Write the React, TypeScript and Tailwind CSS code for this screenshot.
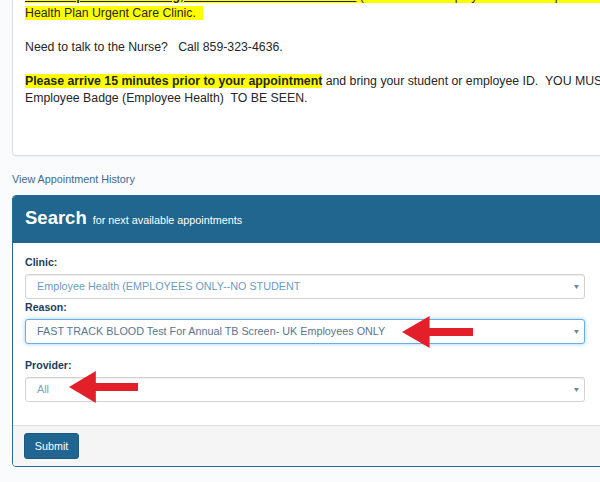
import React from 'react';

const Arrow = ({ className }: { className: string }) => (
  <svg className={className} viewBox="0 0 72 32" preserveAspectRatio="none">
    <path d="M0 16 L28 0 L28 12 L72 12 L72 20 L28 20 L28 32 Z" fill="#e3202a" />
  </svg>
);

const Caret = () => (
  <svg width="5" height="4" viewBox="0 0 5 4" className="mr-[2px]">
    <path d="M0 0 L5 0 L2.5 4 Z" fill="#6a8aa2" />
  </svg>
);

interface SelectProps {
  value: string;
  color: string;
  focused?: boolean;
}

const FakeSelect: React.FC<SelectProps> = ({ value, color, focused = false }) => (
  <div
    className={`mt-[5px] w-[560px] h-[25px] rounded-[3px] flex items-center justify-between pl-[11px] pr-[3px] text-[10.8px] bg-white ${
      focused
        ? 'border border-[#66afe9] shadow-[0_0_4px_rgba(102,175,233,0.6)]'
        : 'border border-[#d2d2d2] shadow-[inset_0_1px_1px_rgba(0,0,0,0.075)]'
    }`}
  >
    <span className="whitespace-nowrap" style={{ color }}>{value}</span>
    <Caret />
  </div>
);

const Label = ({ text, className = '' }: { text: string; className?: string }) => (
  <div className={`text-[10.6px] leading-[14px] font-bold text-[#1c3d5c] ${className}`}>{text}</div>
);

export default function App() {
  return (
    <div className="relative w-[600px] h-[482px] overflow-hidden bg-[#fafbfd] font-['Liberation_Sans',Arial,sans-serif]">
      {/* notice card, top is scrolled off */}
      <div className="ml-[12px] mt-[-30px] w-[640px] bg-white border border-[#dddddd] rounded-[4px] pt-[17px] pl-[12px] pb-[48px] text-[12.3px] leading-[17px] text-[#262626] shadow-[0_1px_1px_rgba(0,0,0,0.05)]">
        <div className="whitespace-nowrap">
          <span className="bg-[#ffff00]">
            <b className="underline">Need help with scheduling, PLEASE CALL: 859-323-2778</b> (students and employee health compliance questions) or the UK
          </span>
        </div>
        <div className="whitespace-nowrap">
          <span className="bg-[#ffff00]">Health Plan Urgent Care Clinic.{'\u00a0\u00a0'}</span>
        </div>
        <div className="h-[17px]" />
        <div className="whitespace-nowrap">Need to talk to the Nurse?{'\u00a0\u00a0 '}Call 859-323-4636.</div>
        <div className="h-[17px]" />
        <div className="whitespace-nowrap">
          <b className="bg-[#ffff00]">Please arrive 15 minutes prior to your appointment</b> and bring your student or employee ID.{'\u00a0 '}YOU MUST PRESENT YOUR ID or
        </div>
        <div className="whitespace-nowrap">Employee Badge (Employee Health){'\u00a0 '}TO BE SEEN.</div>
      </div>

      <div className="ml-[12px] mt-[15px] text-[10.8px] leading-[16px] text-[#3f6b8e]">View Appointment History</div>

      {/* search panel */}
      <div className="ml-[12px] mt-[8px] w-[620px] border border-[#276a93] rounded-[4px] overflow-hidden">
        <div className="bg-[#20668f] h-[47px] pt-[13px] px-[12px] flex items-baseline gap-[6px] text-white">
          <span className="text-[18.5px] leading-[18.5px] font-bold">Search</span>
          <span className="text-[10.8px]">for next available appointments</span>
        </div>

        <div className="bg-white px-[12px] pt-[12px] pb-[23px]">
          <Label text="Clinic:" />
          <FakeSelect value="Employee Health (EMPLOYEES ONLY--NO STUDENT" color="#6e9bbf" />
          <Label text="Reason:" className="mt-[1px]" />
          <FakeSelect value="FAST TRACK BLOOD Test For Annual TB Screen- UK Employees ONLY" color="#5b7590" focused />
          <Label text="Provider:" className="mt-[14px]" />
          <FakeSelect value="All" color="#7ba1c2" />
        </div>

        <div className="border-t border-[#dddddd] bg-[#f5f5f5] py-[7px] px-[12px]">
          <button className="-ml-[1px] w-[55px] h-[26px] bg-[#216690] border border-[#1b5a80] rounded-[3px] text-white text-[10.8px]">
            Submit
          </button>
        </div>
      </div>

      <Arrow className="absolute left-[402px] top-[316px] w-[71px] h-[32px] blur-[0.4px]" />
      <Arrow className="absolute left-[69px] top-[371px] w-[69px] h-[32px] blur-[0.4px]" />
    </div>
  );
}
